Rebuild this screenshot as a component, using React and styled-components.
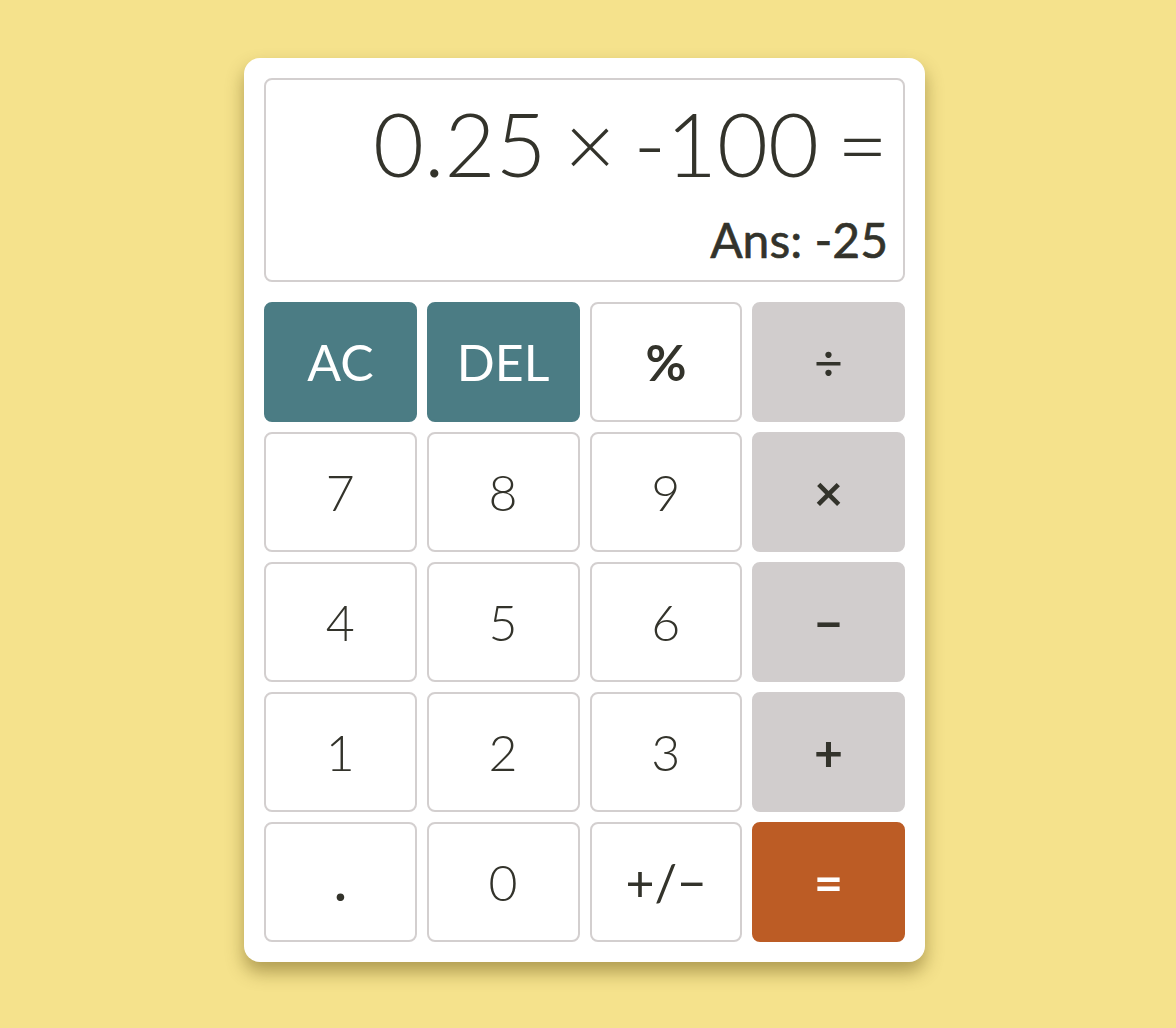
import React from "react";
import styled, { createGlobalStyle } from "styled-components";

const GlobalStyle = createGlobalStyle`
  body {
    margin: 0;
    background: #f5e28c;
    font-family: Lato, "Open Sans", sans-serif;
  }
`;

const keys = [
  { label: "AC", kind: "clear" },
  { label: "DEL", kind: "clear" },
  { label: "%", kind: "plain", weight: 700 },
  { label: "÷", kind: "op", weight: 400 },
  { label: "7" },
  { label: "8" },
  { label: "9" },
  { label: "×", kind: "op" },
  { label: "4" },
  { label: "5" },
  { label: "6" },
  { label: "−", kind: "op" },
  { label: "1" },
  { label: "2" },
  { label: "3" },
  { label: "+", kind: "op" },
  { label: ".", kind: "plain", weight: 700 },
  { label: "0" },
  { label: "+/−", kind: "plain", weight: 400 },
  { label: "=", kind: "equals" },
];

const App = () => {
  return (
    <>
      <GlobalStyle />
      <Page>
        <Card>
          <Display>
            <Expression>0.25 × -100 =</Expression>
            <Answer>Ans: -25</Answer>
          </Display>
          <Pad>
            {keys.map((k) => (
              <Key key={k.label} $kind={k.kind || "plain"} $weight={k.weight}>
                {k.label}
              </Key>
            ))}
          </Pad>
        </Card>
      </Page>
    </>
  );
};

export default App;

const Page = styled.div`
  min-height: 1028px;
  display: flex;
  justify-content: center;
  align-items: flex-start;
  padding: 58px 7px 0 0;
  box-sizing: border-box;
`;

const Card = styled.div`
  width: 681px;
  box-sizing: border-box;
  padding: 20px;
  background: #fff;
  border-radius: 16px;
  box-shadow: 0 10px 18px rgba(90, 70, 10, 0.45);
  display: flex;
  flex-direction: column;
  gap: 20px;
`;

const Display = styled.div`
  height: 204px;
  box-sizing: border-box;
  border: 2px solid #d3cfcf;
  border-radius: 8px;
  padding: 8px 15px 12px;
  display: flex;
  flex-direction: column;
  align-items: flex-end;
  justify-content: space-between;
  color: #33332b;
`;

const Expression = styled.div`
  font-size: 88px;
  font-weight: 300;
  line-height: 110px;
  word-spacing: -6px;
`;

const Answer = styled.div`
  font-size: 48px;
  font-weight: 400;
  line-height: 56px;
  -webkit-text-stroke: 0.6px #33332b;
`;

const colors = {
  plain: { bg: "#fff", fg: "#33332b", border: "#d3cfcf" },
  op: { bg: "#d1cdcd", fg: "#33332b", border: "#d1cdcd" },
  clear: { bg: "#4b7c84", fg: "#fff", border: "#4b7c84" },
  equals: { bg: "#bc5c25", fg: "#fff", border: "#bc5c25" },
};

const Pad = styled.div`
  display: grid;
  grid-template-columns: repeat(4, 1fr);
  grid-auto-rows: 120px;
  gap: 10px;
`;

const Key = styled.button`
  box-sizing: border-box;
  border-radius: 8px;
  border: 2px solid ${(p) => colors[p.$kind].border};
  background: ${(p) => colors[p.$kind].bg};
  color: ${(p) => colors[p.$kind].fg};
  font-family: Lato, "Open Sans", sans-serif;
  font-size: 50px;
  font-weight: ${(p) => p.$weight || (p.$kind === "plain" ? 300 : p.$kind === "clear" ? 400 : 700)};
  display: flex;
  align-items: center;
  justify-content: center;
  padding: 0;
  cursor: pointer;
`;
